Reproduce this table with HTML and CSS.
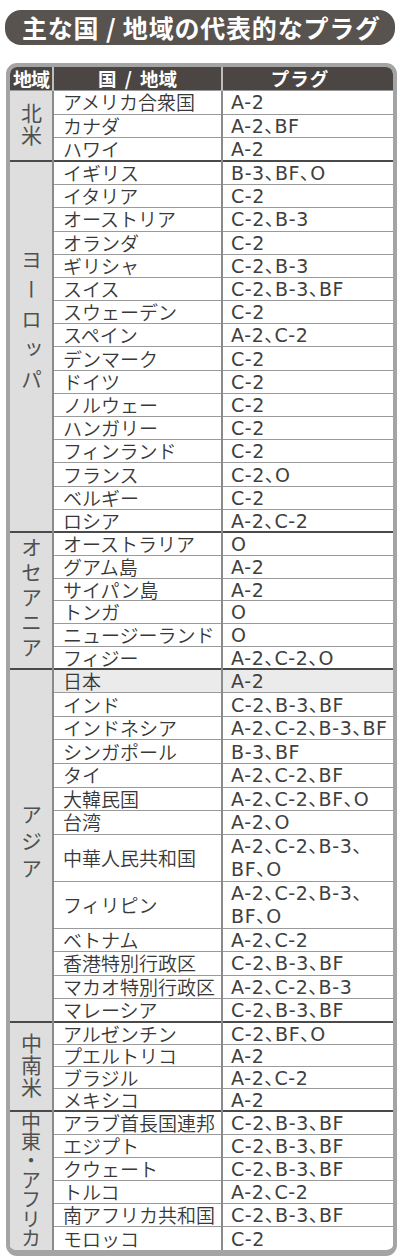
FILE: index.html
```html
<!DOCTYPE html>
<html lang="ja">
<head>
<meta charset="utf-8">
<link rel="stylesheet" href="styles.css">
</head>
<body>
<h1 class="title">主な国 / 地域の代表的なプラグ</h1>
<div class="frame">
<table class="plugs">
<colgroup><col class="c-region"><col class="c-country"><col class="c-plug"></colgroup>
<thead>
<tr><th class="h-region">地域</th><th class="h-country">国 / 地域</th><th class="h-plug">プラグ</th></tr>
</thead>
<tbody class="g g-na">
<tr><td class="region" rowspan="3"><span class="vt vt-na">北米</span></td><td>アメリカ合衆国</td><td class="p">A-2</td></tr>
<tr><td>カナダ</td><td class="p">A-2、BF</td></tr>
<tr><td>ハワイ</td><td class="p">A-2</td></tr>
</tbody>
<tbody class="g g-eu">
<tr><td class="region" rowspan="16"><span class="vt vt-eu">ヨーロッパ</span></td><td>イギリス</td><td class="p">B-3、BF、O</td></tr>
<tr><td>イタリア</td><td class="p">C-2</td></tr>
<tr><td>オーストリア</td><td class="p">C-2、B-3</td></tr>
<tr><td>オランダ</td><td class="p">C-2</td></tr>
<tr><td>ギリシャ</td><td class="p">C-2、B-3</td></tr>
<tr><td>スイス</td><td class="p">C-2、B-3、BF</td></tr>
<tr><td>スウェーデン</td><td class="p">C-2</td></tr>
<tr><td>スペイン</td><td class="p">A-2、C-2</td></tr>
<tr><td>デンマーク</td><td class="p">C-2</td></tr>
<tr><td>ドイツ</td><td class="p">C-2</td></tr>
<tr><td>ノルウェー</td><td class="p">C-2</td></tr>
<tr><td>ハンガリー</td><td class="p">C-2</td></tr>
<tr><td>フィンランド</td><td class="p">C-2</td></tr>
<tr><td>フランス</td><td class="p">C-2、O</td></tr>
<tr><td>ベルギー</td><td class="p">C-2</td></tr>
<tr><td>ロシア</td><td class="p">A-2、C-2</td></tr>
</tbody>
<tbody class="g g-oc">
<tr><td class="region" rowspan="6"><span class="vt vt-oc">オセアニア</span></td><td>オーストラリア</td><td class="p">O</td></tr>
<tr><td>グアム島</td><td class="p">A-2</td></tr>
<tr><td>サイパン島</td><td class="p">A-2</td></tr>
<tr><td>トンガ</td><td class="p">O</td></tr>
<tr><td>ニュージーランド</td><td class="p">O</td></tr>
<tr><td>フィジー</td><td class="p">A-2、C-2、O</td></tr>
</tbody>
<tbody class="g g-as">
<tr class="hl"><td class="region" rowspan="13"><span class="vt vt-as">アジア</span></td><td>日本</td><td class="p">A-2</td></tr>
<tr><td>インド</td><td class="p">C-2、B-3、BF</td></tr>
<tr><td>インドネシア</td><td class="p">A-2、C-2、B-3、BF</td></tr>
<tr><td>シンガポール</td><td class="p">B-3、BF</td></tr>
<tr><td>タイ</td><td class="p">A-2、C-2、BF</td></tr>
<tr><td>大韓民国</td><td class="p">A-2、C-2、BF、O</td></tr>
<tr><td>台湾</td><td class="p">A-2、O</td></tr>
<tr class="dbl"><td>中華人民共和国</td><td class="p">A-2、C-2、B-3、<br>BF、O</td></tr>
<tr class="dbl"><td>フィリピン</td><td class="p">A-2、C-2、B-3、<br>BF、O</td></tr>
<tr><td>ベトナム</td><td class="p">A-2、C-2</td></tr>
<tr><td>香港特別行政区</td><td class="p">C-2、B-3、BF</td></tr>
<tr><td>マカオ特別行政区</td><td class="p">A-2、C-2、B-3</td></tr>
<tr><td>マレーシア</td><td class="p">C-2、B-3、BF</td></tr>
</tbody>
<tbody class="g g-la">
<tr><td class="region" rowspan="4"><span class="vt vt-la">中南米</span></td><td>アルゼンチン</td><td class="p">C-2、BF、O</td></tr>
<tr><td>プエルトリコ</td><td class="p">A-2</td></tr>
<tr><td>ブラジル</td><td class="p">A-2、C-2</td></tr>
<tr><td>メキシコ</td><td class="p">A-2</td></tr>
</tbody>
<tbody class="g g-me">
<tr><td class="region" rowspan="6"><span class="vt vt-me">中東・アフリカ</span></td><td>アラブ首長国連邦</td><td class="p">C-2、B-3、BF</td></tr>
<tr><td>エジプト</td><td class="p">C-2、B-3、BF</td></tr>
<tr><td>クウェート</td><td class="p">C-2、B-3、BF</td></tr>
<tr><td>トルコ</td><td class="p">A-2、C-2</td></tr>
<tr><td>南アフリカ共和国</td><td class="p">C-2、B-3、BF</td></tr>
<tr><td>モロッコ</td><td class="p">C-2</td></tr>
</tbody>
</table>
</div>
</body>
</html>
```

FILE: styles.css
```css
html, body {
  margin: 0;
  padding: 0;
  background: #ffffff;
}
body {
  width: 400px;
  font-family: "Noto Sans CJK JP", "Noto Sans", sans-serif;
  color: #3a3a3a;
}
.title {
  margin: 10px 5px 0 5px;
  height: 35px;
  border-radius: 16px;
  background: #58534f;
  color: #ffffff;
  font-size: 25px;
  font-weight: 700;
  line-height: 35px;
  padding-left: 17px;
  letter-spacing: 0.8px;
  white-space: nowrap;
}
.frame {
  margin: 18px 3px 0 6px;
  border: 4px solid #a4a4a4;
  border-bottom-width: 6px;
  border-radius: 11px;
  overflow: hidden;
  background: #fff;
}
.plugs {
  width: 100%;
  border-collapse: collapse;
  table-layout: fixed;
}
.c-region { width: 43px; }
.c-country { width: 169px; }
.c-plug { width: 171px; }
thead tr { height: 23px; }
th {
  background: #4b4643;
  color: #ffffff;
  font-weight: 700;
  font-size: 18.5px;
  line-height: 23px;
  padding: 0;
  text-align: center;
  border-left: 2px solid #bdbdbd;
}
th.h-country { word-spacing: 4px; }
th.h-region {
  border-left: none;
  font-size: 19px;
  letter-spacing: -1px;
}
th.h-plug { padding-right: 16px; letter-spacing: 1px; }
td {
  padding: 0 0 0 9px;
  font-size: 19px;
  font-weight: 350;
  line-height: 20px;
  white-space: nowrap;
  border-top: 1px solid #9a9a9a;
  border-left: 2px solid #8a8a8a;
  vertical-align: middle;
  color: #383838;
}
td.p {
  padding-left: 8px;
  font-family: "DejaVu Sans", "Noto Sans CJK JP", sans-serif;
  font-feature-settings: "palt";
  font-weight: 400;
  font-size: 19px;
  letter-spacing: 0.6px;
  color: #404040;
}
tr.dbl td.p { line-height: 23px; }
tbody.g { border-top: 2px solid #4a4a4a; }
thead + tbody.g { border-top: none; }
td.region {
  background: #dedede;
  padding: 0;
  border-left: none;
  text-align: center;
  color: #505050;
  font-weight: 400;
}
.vt {
  display: inline-block;
  writing-mode: vertical-rl;
  text-orientation: upright;
  font-size: 21px;
  line-height: 21px;
}
.vt-na { letter-spacing: 1px; }
.vt-eu { letter-spacing: 9px; padding-bottom: 44px; }
.vt-oc { letter-spacing: 4px; }
.vt-as { letter-spacing: 6px; }
.vt-la { letter-spacing: 1px; }
.vt-me { font-size: 20px; letter-spacing: -0.6px; }
tr.hl td:not(.region) { background: #ebebeb; }
.g-na tr { height: 23.67px; }
.g-eu tr { height: 23.19px; }
.g-oc tr { height: 22.83px; }
.g-as tr { height: 23.53px; }
.g-as tr.dbl { height: 47.06px; }
.g-la tr { height: 22.25px; }
.g-me tr { height: 22.67px; }
```
